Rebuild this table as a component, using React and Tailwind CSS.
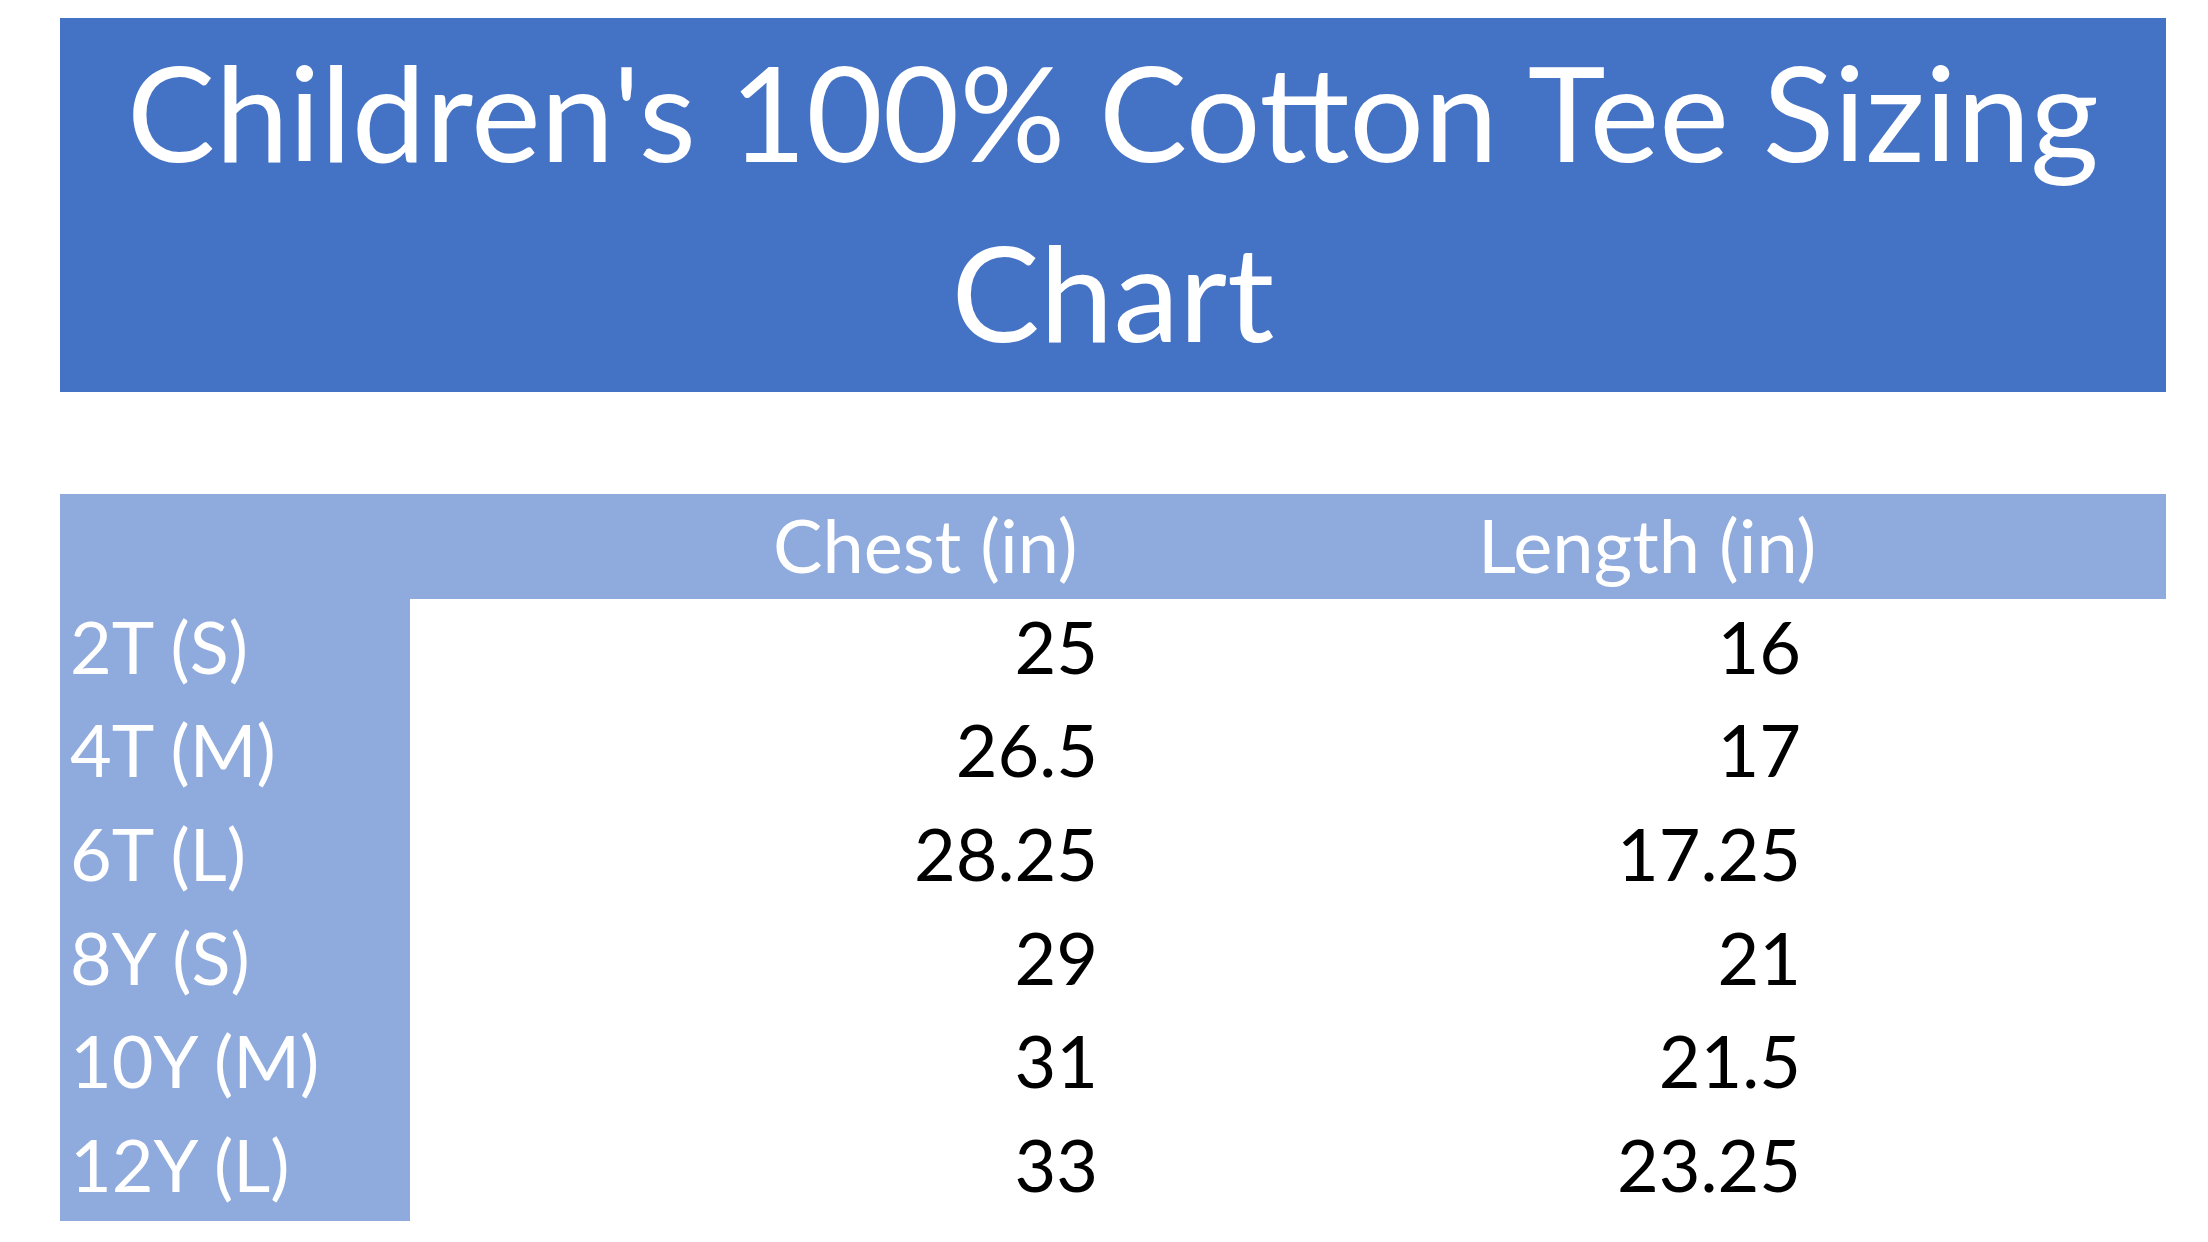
const rows = [
  ['2T (S)', '25', '16'],
  ['4T (M)', '26.5', '17'],
  ['6T (L)', '28.25', '17.25'],
  ['8Y (S)', '29', '21'],
  ['10Y (M)', '31', '21.5'],
  ['12Y (L)', '33', '23.25'],
]

export default function App() {
  return (
    <div className="w-[2208px] h-[1242px] bg-white overflow-hidden font-['Lato',sans-serif]">
      <div className="ml-[60px] w-[2106px] pt-[18px]">
        <div className="h-[374px] pb-[8px] bg-[#4472c4] flex flex-col items-center justify-center text-white text-[132px] leading-[180px] text-center">
          <span>Children's 100% Cotton Tee Sizing</span>
          <span>Chart</span>
        </div>

        <div className="mt-[102px]">
          <div className="grid grid-cols-[350px_698px_703px_1fr] h-[105px] bg-[#8faadc] text-white text-[74px] leading-none">
            <div />
            <div className="h-full pb-[4px] pl-[363px] flex items-center whitespace-nowrap">Chest (in)</div>
            <div className="h-full pb-[4px] pl-[370px] flex items-center whitespace-nowrap">Length (in)</div>
            <div />
          </div>
          {rows.map(([size, chest, len]) => (
            <div key={size} className="grid grid-cols-[350px_698px_703px_1fr] h-[103.6px] text-[72px] leading-none">
              <div className="h-full bg-[#8faadc] text-white pl-[10px] pb-[10px] flex items-center">{size}</div>
              <div className="h-full pr-[10px] pb-[10px] flex items-center justify-end text-black">{chest}</div>
              <div className="h-full pr-[10px] pb-[10px] flex items-center justify-end text-black">{len}</div>
              <div />
            </div>
          ))}
        </div>
      </div>
    </div>
  )
}
